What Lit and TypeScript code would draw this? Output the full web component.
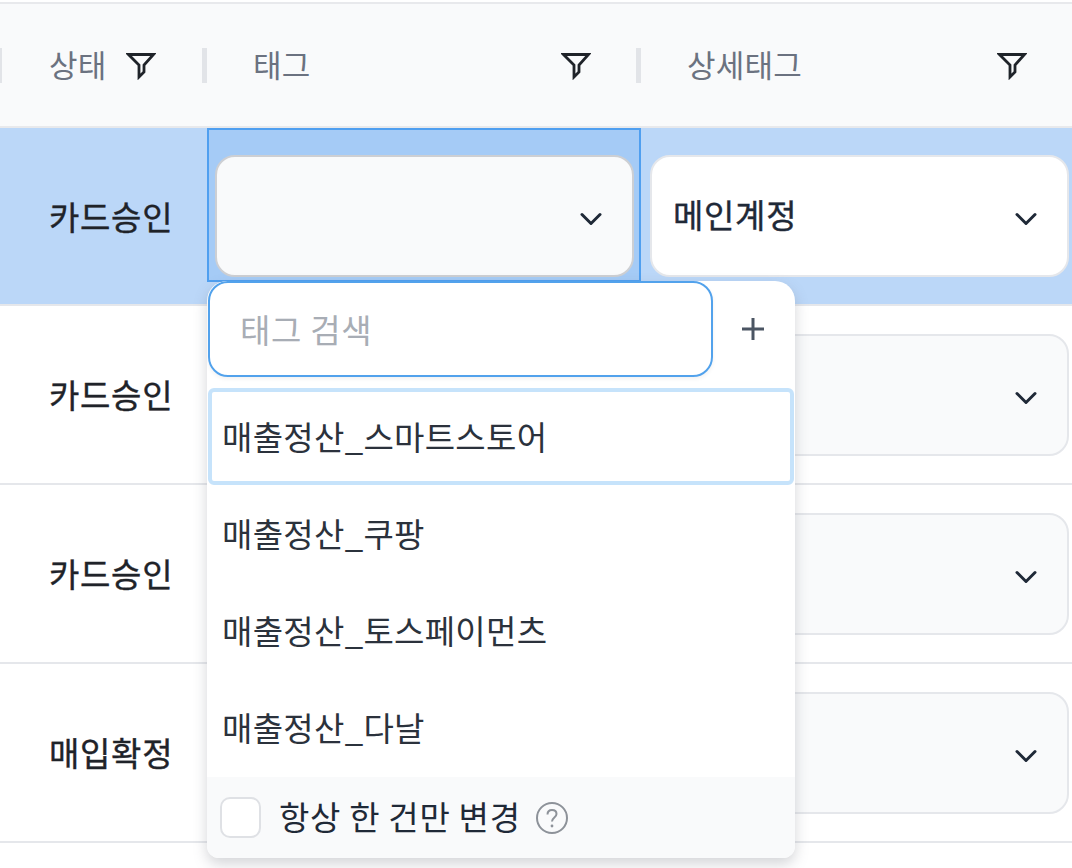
import { LitElement, html, css } from "lit";
import { customElement } from "lit/decorators.js";

const funnel = html`<svg class="funnel" viewBox="0 0 30 30" fill="none" stroke="#1f2329" stroke-width="2.8" stroke-linejoin="miter"><path d="M2.5 4.5H27.5L18 15V22L13 27V15Z"/></svg>`;
const chevron = html`<svg class="chev" viewBox="0 0 22 16" fill="none" stroke="#1f2937" stroke-width="3" stroke-linecap="round" stroke-linejoin="round"><path d="M2 3.5L11 12.5L20 3.5"/></svg>`;

const rows = ["카드승인", "카드승인", "카드승인", "매입확정"];
const tags = ["매출정산_스마트스토어", "매출정산_쿠팡", "매출정산_토스페이먼츠", "매출정산_다날"];

@customElement("app-root")
export class AppRoot extends LitElement {
  static styles = css`
    :host { display: block; width: 1072px; height: 868px; overflow: hidden; background: #fff; position: relative;
      font-family: "Noto Sans CJK KR", "Noto Sans", sans-serif; color: #1f2937; }
    .table { display: flex; flex-direction: column; padding-top: 2px; }
    .row { display: grid; grid-template-columns: 207px 434px 431px; box-sizing: border-box; height: 179px; border-bottom: 2px solid #e5e7eb; }
    .head { height: 126px; background: #f9fafb; border-top: 2px solid #e8e9ec; border-bottom: 2px solid #e8e9ec; }
    .th { display: flex; align-items: center; position: relative; font-size: 31px; letter-spacing: 0.2px; color: #6b7280; }
    .th > svg { margin-top: 3px; }
    .th::after { content: ""; position: absolute; right: 0; top: 44px; width: 5px; height: 35px; background: #e2e4e8; }
    .th.s { padding-left: 49px; gap: 20px; }
    .th.s::before { content: ""; position: absolute; left: 0; top: 44px; width: 2px; height: 35px; background: #e2e4e8; }
    .th.t { padding: 0 50px 3px 46px; justify-content: space-between; }
    .th.d { padding: 0 45px 3px 46px; justify-content: space-between; }
    .th.s { padding-bottom: 3px; }
    .th.d::after { display: none; }
    .funnel { width: 30px; height: 30px; flex: none; }
    .cell { display: flex; align-items: center; box-sizing: border-box; }
    .status { padding: 0 0 1px 49px; font-size: 33px; letter-spacing: 0.7px; -webkit-text-stroke: 0.4px #1f2329; color: #1f2329; }
    .tagc { padding: 0 7px 0 8px; position: relative; }
    .detc { padding: 0 3px 0 9px; }
    .sel { flex: 1; height: 122px; box-sizing: border-box; border: 2px solid #e5e7eb; border-radius: 20px; background: #f9fafb;
      display: flex; align-items: center; justify-content: space-between; padding: 0 30px 0 21px; font-size: 33px; letter-spacing: 0.7px;
      -webkit-text-stroke: 0.4px #1f2937; color: #1f2937; }
    .sel > span { margin-bottom: 4px; }
    .chev { width: 22px; height: 16px; flex: none; margin-top: 6px; }
    .sel.white { background: #fff; }
    .sel.grey { border-color: #cdcfd3; }
    .row.active { background: #bbd7f8; height: 178px; }
    .row.active .tagc { background: #a5cbf6; outline: 2px solid #4f9ff0; outline-offset: -2px; height: 154px; align-self: start; align-items: flex-start; padding-top: 27px; }
    .drop { position: absolute; left: 0; top: 153px; z-index: 5; width: 588px; height: 577px; background: #fff; border-radius: 20px 20px 12px 12px;
      box-shadow: 0 6px 14px rgba(100, 105, 115, .28); display: flex; flex-direction: column; overflow: hidden; }
    .searchrow { display: flex; align-items: center; height: 96px; flex: none; }
    .search { box-sizing: border-box; margin-left: 1px; width: 505px; height: 96px; border: 2px solid #52a2ec; border-radius: 20px; display: flex; align-items: center;
      padding: 0 0 1px 30px; font-size: 33px; letter-spacing: 0.7px; color: #a8adb5; box-shadow: 0 2px 4px rgba(0,0,0,.06); }
    .plus { width: 26px; height: 26px; margin-left: 27px; flex: none; }
    .list { display: flex; flex-direction: column; margin-top: 11px; flex: 1; }
    .item { height: 97px; flex: none; box-sizing: border-box; padding: 0 0 1px 15px; display: flex; align-items: center; font-size: 33px; letter-spacing: 0.3px; color: #2b323c; }
    .item.on { margin: 0 1px; padding: 0 0 1px 10px; border: 4px solid #c6e3fb; border-radius: 6px; }
    .foot { height: 81px; flex: none; background: #f9fafb; display: flex; align-items: center; padding-left: 13px; font-size: 33px; letter-spacing: 0.7px; color: #1f2937; }
    .foot > span { margin-bottom: 3px; }
    .check { width: 41px; height: 41px; box-sizing: border-box; border: 2px solid #dfe1e5; border-radius: 10px; background: #fff; margin-right: 18px; }
    .help { width: 34px; height: 34px; margin-left: 14px; }
  `;

  render() {
    return html`<div class="table">
      <div class="row head">
        <div class="th s">상태 ${funnel}</div>
        <div class="th t">태그 ${funnel}</div>
        <div class="th d">상세태그 ${funnel}</div>
      </div>
      ${rows.map((r, i) => html`<div class="row ${i === 0 ? "active" : ""}">
        <div class="cell status">${r}</div>
        <div class="cell tagc">
          <div class="sel ${i === 0 ? "grey" : ""}"><span></span>${chevron}</div>
          ${i === 0 ? this.dropdown() : ""}
        </div>
        <div class="cell detc">
          <div class="sel ${i === 0 ? "white" : ""}"><span>${i === 0 ? "메인계정" : ""}</span>${chevron}</div>
        </div>
      </div>`)}
    </div>`;
  }

  dropdown() {
    return html`<div class="drop">
      <div class="searchrow">
        <div class="search">태그 검색</div>
        <svg class="plus" viewBox="0 0 26 26" stroke="#4b5563" stroke-width="3" fill="none"><path d="M13 2V24M2 13H24"/></svg>
      </div>
      <div class="list">
        ${tags.map((t, i) => html`<div class="item ${i === 0 ? "on" : ""}">${t}</div>`)}
      </div>
      <div class="foot">
        <div class="check"></div>
        <span>항상 한 건만 변경</span>
        <svg class="help" viewBox="0 0 34 34" fill="none"><circle cx="17" cy="17" r="15" stroke="#8d9299" stroke-width="2"/><path d="M12.5 13.5C12.5 10.5 14.5 9 17 9C19.5 9 21.5 10.5 21.5 13C21.5 16.5 17 16.5 17 20.5" stroke="#8d9299" stroke-width="2"/><circle cx="17" cy="25" r="1.4" fill="#8d9299"/></svg>
      </div>
    </div>`;
  }
}
